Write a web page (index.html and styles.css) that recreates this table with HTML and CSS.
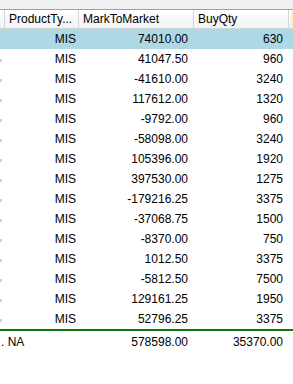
FILE: index.html
```html
<!DOCTYPE html>
<html>
<head>
<meta charset="utf-8">
<link rel="stylesheet" href="styles.css">
</head>
<body>
<div class="grid">
  <div class="topstrip"></div>
  <div class="row head">
    <div class="c c0"></div>
    <div class="c c1">ProductTy...</div>
    <div class="c c2">MarkToMarket</div>
    <div class="c c3">BuyQty</div>
    <div class="c c4"><span class="ylw"></span></div>
  </div>
  <div class="body">
    <div class="row sel"><div class="c c0"><i class="dot"></i></div><div class="c c1">MIS</div><div class="c c2">74010.00</div><div class="c c3">630</div><div class="c c4"></div></div>
    <div class="row"><div class="c c0"><i class="dot"></i></div><div class="c c1">MIS</div><div class="c c2">41047.50</div><div class="c c3">960</div><div class="c c4"></div></div>
    <div class="row"><div class="c c0"><i class="dot"></i></div><div class="c c1">MIS</div><div class="c c2">-41610.00</div><div class="c c3">3240</div><div class="c c4"></div></div>
    <div class="row"><div class="c c0"><i class="dot"></i></div><div class="c c1">MIS</div><div class="c c2">117612.00</div><div class="c c3">1320</div><div class="c c4"></div></div>
    <div class="row"><div class="c c0"><i class="dot"></i></div><div class="c c1">MIS</div><div class="c c2">-9792.00</div><div class="c c3">960</div><div class="c c4"></div></div>
    <div class="row"><div class="c c0"><i class="dot"></i></div><div class="c c1">MIS</div><div class="c c2">-58098.00</div><div class="c c3">3240</div><div class="c c4"></div></div>
    <div class="row"><div class="c c0"><i class="dot"></i></div><div class="c c1">MIS</div><div class="c c2">105396.00</div><div class="c c3">1920</div><div class="c c4"></div></div>
    <div class="row"><div class="c c0"><i class="dot"></i></div><div class="c c1">MIS</div><div class="c c2">397530.00</div><div class="c c3">1275</div><div class="c c4"></div></div>
    <div class="row"><div class="c c0"><i class="dot"></i></div><div class="c c1">MIS</div><div class="c c2">-179216.25</div><div class="c c3">3375</div><div class="c c4"></div></div>
    <div class="row"><div class="c c0"><i class="dot"></i></div><div class="c c1">MIS</div><div class="c c2">-37068.75</div><div class="c c3">1500</div><div class="c c4"></div></div>
    <div class="row"><div class="c c0"><i class="dot"></i></div><div class="c c1">MIS</div><div class="c c2">-8370.00</div><div class="c c3">750</div><div class="c c4"></div></div>
    <div class="row"><div class="c c0"><i class="dot"></i></div><div class="c c1">MIS</div><div class="c c2">1012.50</div><div class="c c3">3375</div><div class="c c4"></div></div>
    <div class="row"><div class="c c0"><i class="dot"></i></div><div class="c c1">MIS</div><div class="c c2">-5812.50</div><div class="c c3">7500</div><div class="c c4"></div></div>
    <div class="row"><div class="c c0"><i class="dot"></i></div><div class="c c1">MIS</div><div class="c c2">129161.25</div><div class="c c3">1950</div><div class="c c4"></div></div>
    <div class="row"><div class="c c0"><i class="dot"></i></div><div class="c c1">MIS</div><div class="c c2">52796.25</div><div class="c c3">3375</div><div class="c c4"></div></div>
  </div>
  <div class="row foot">
    <div class="c fl">. NA</div>
    <div class="c c2">578598.00</div>
    <div class="c c3">35370.00</div>
    <div class="c c4"></div>
  </div>
</div>
</body>
</html>
```
FILE: styles.css
```css
html, body {
  margin: 0;
  padding: 0;
  background: #ffffff;
}
body {
  width: 293px;
  height: 384px;
  overflow: hidden;
  font-family: "Liberation Sans", Arial, sans-serif;
  font-size: 12px;
  color: #000;
}
.grid {
  display: flex;
  flex-direction: column;
}
.topstrip {
  height: 9px;
  background: #f0f0f0;
  border-bottom: 1px solid #a0a0a0;
}
.row {
  display: flex;
  height: 20px;
  align-items: center;
}
.c {
  box-sizing: border-box;
  white-space: nowrap;
  overflow: hidden;
  flex: none;
}
.c0 {
  width: 4px;
  display: flex;
  align-items: center;
}
.c1 { width: 74px; text-align: right; padding-right: 2px; }
.c2 { width: 115px; text-align: right; padding-right: 5px; }
.c3 { width: 95px; text-align: right; padding-right: 5px; }
.c4 { flex: 1; }
.dot {
  display: block;
  width: 2px;
  height: 3px;
  margin-top: 2px;
  background: #c9d3dc;
}
.head {
  height: 18px;
  background: linear-gradient(#ffffff, #f1f2f4);
  border-bottom: 1px solid #d5d5d5;
  align-items: stretch;
}
.head .c {
  display: flex;
  align-items: center;
  border-right: 1px solid #d5d5d5;
  text-align: left;
  padding: 0 0 0 4px;
  color: #000;
}
.head .c4 { border-right: none; padding-left: 2px; }
.ylw {
  display: block;
  width: 4px;
  height: 14px;
  background: #fff2b0;
}
.body .row {
  background: #ffffff;
}
.body .row.sel {
  background: #add8e6;
}
.foot {
  border-top: 2px solid #0f7a0f;
  height: 22px;
}
.fl {
  width: 78px;
  text-align: left;
  padding-left: 1px;
}
```
